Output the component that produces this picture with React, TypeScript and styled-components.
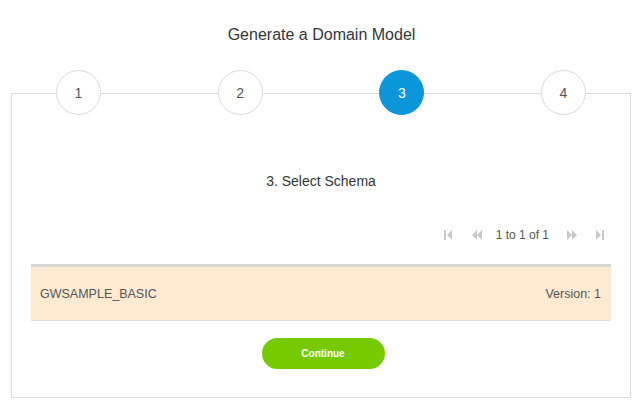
import React from "react";
import styled, { createGlobalStyle } from "styled-components";

const GlobalStyle = createGlobalStyle`
  html, body { margin: 0; padding: 0; background: #ffffff; }
  body { font-family: "Liberation Sans", Arial, sans-serif; }
`;

const Page = styled.div`
  width: 643px;
  height: 406px;
  display: flex;
  flex-direction: column;
  overflow: hidden;
`;

const Title = styled.h1`
  margin: 26px 0 0 0;
  font-size: 16px;
  font-weight: normal;
  line-height: 18px;
  color: #32363a;
  text-align: center;
`;

const Panel = styled.section`
  margin: 49px 12px 0 11px;
  height: 303px;
  border: 1px solid #d9d9d9;
  display: flex;
  flex-direction: column;
`;

const Steps = styled.div`
  margin-top: -24px;
  padding: 0 44px;
  display: flex;
  justify-content: space-between;
`;

const Step = styled.div<{ $active?: boolean }>`
  width: 45px;
  height: 45px;
  box-sizing: border-box;
  border-radius: 50%;
  border: 1px solid ${(p) => (p.$active ? "#0a96d9" : "#d9d9d9")};
  background: ${(p) => (p.$active ? "#0a96d9" : "#ffffff")};
  color: ${(p) => (p.$active ? "#ffffff" : "#555555")};
  font-size: 14px;
  display: flex;
  align-items: center;
  justify-content: center;
`;

const Heading = styled.h2`
  margin: 58px 0 0 0;
  font-size: 14px;
  font-weight: normal;
  line-height: 16px;
  color: #32363a;
  text-align: center;
`;

const Pager = styled.div`
  margin-top: 38px;
  padding-right: 16px;
  display: flex;
  justify-content: flex-end;
  align-items: center;
  height: 16px;
`;

const PagerButton = styled.span<{ $gapRight?: number; $gapLeft?: number }>`
  width: 28px;
  height: 16px;
  display: flex;
  align-items: center;
  justify-content: center;
  margin-right: ${(p) => p.$gapRight ?? 0}px;
  margin-left: ${(p) => p.$gapLeft ?? 0}px;
`;

const PagerText = styled.span`
  font-size: 12px;
  line-height: 16px;
  color: #555555;
  margin: 0 9px 0 5px;
`;

const Row = styled.div`
  margin: 21px 19px 0 19px;
  height: 53px;
  border-top: 3px solid #d5d5d5;
  background: #fee9d1;
  box-shadow: 0 1px 0 #dcdcdc;
  padding: 0 10px 0 9px;
  display: flex;
  align-items: center;
  justify-content: space-between;
  font-size: 12.5px;
  color: #555555;
`;

const ContinueButton = styled.button`
  margin: 18px auto 0 auto;
  transform: translateX(2px);
  width: 123px;
  height: 31px;
  border: none;
  border-radius: 16px;
  background: #76cb00;
  color: #ffffff;
  font-family: "Liberation Sans", Arial, sans-serif;
  font-size: 10px;
  font-weight: bold;
  cursor: pointer;
`;

const grey = "#c8c8c8";

const FirstIcon = () => (
  <svg width="8" height="10" viewBox="0 0 8 10">
    <rect x="0" y="0" width="2" height="10" fill={grey} />
    <polygon points="8,0 3,5 8,10" fill={grey} />
  </svg>
);
const PrevIcon = () => (
  <svg width="11" height="10" viewBox="0 0 11 10">
    <polygon points="6,0 1,5 6,10" fill={grey} />
    <polygon points="11,0 6,5 11,10" fill={grey} />
  </svg>
);
const NextIcon = () => (
  <svg width="11" height="10" viewBox="0 0 11 10">
    <polygon points="0,0 5,5 0,10" fill={grey} />
    <polygon points="5,0 10,5 5,10" fill={grey} />
  </svg>
);
const LastIcon = () => (
  <svg width="8" height="10" viewBox="0 0 8 10">
    <polygon points="0,0 5,5 0,10" fill={grey} />
    <rect x="6" y="0" width="2" height="10" fill={grey} />
  </svg>
);

export default function App() {
  return (
    <Page>
      <GlobalStyle />
      <Title>Generate a Domain Model</Title>
      <Panel>
        <Steps>
          <Step>1</Step>
          <Step>2</Step>
          <Step $active>3</Step>
          <Step>4</Step>
        </Steps>
        <Heading>3. Select Schema</Heading>
        <Pager>
          <PagerButton $gapRight={1}>
            <FirstIcon />
          </PagerButton>
          <PagerButton>
            <PrevIcon />
          </PagerButton>
          <PagerText>1 to 1 of 1</PagerText>
          <PagerButton>
            <NextIcon />
          </PagerButton>
          <PagerButton>
            <LastIcon />
          </PagerButton>
        </Pager>
        <Row>
          <span>GWSAMPLE_BASIC</span>
          <span>Version: 1</span>
        </Row>
        <ContinueButton>Continue</ContinueButton>
      </Panel>
    </Page>
  );
}
